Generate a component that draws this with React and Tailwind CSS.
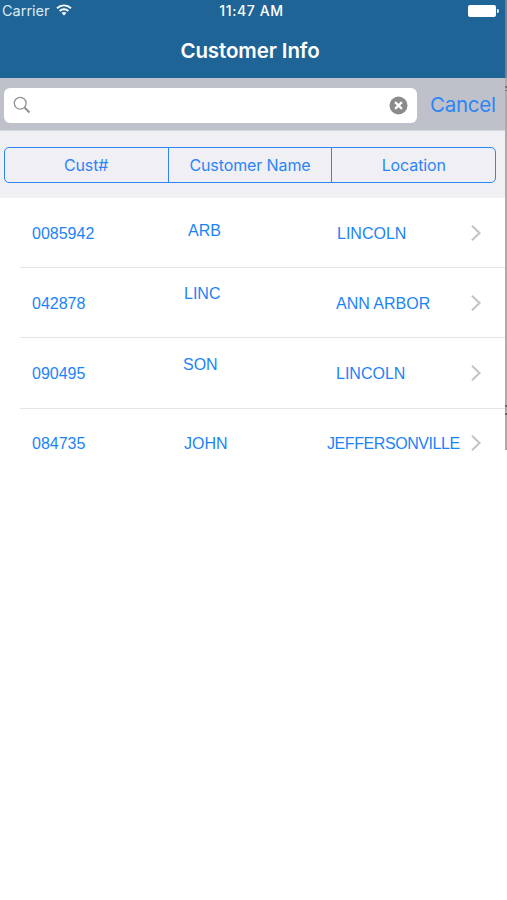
import { useState } from "react";

const customers = [
  { id: "0085942", name: "ARB", location: "LINCOLN", idPos: "pt-[2px]", namePos: "pl-[188px] pb-[3px]", locPos: "pl-[337px] pt-[3px]" },
  { id: "042878", name: "LINC", location: "ANN ARBOR", idPos: "pt-[2px]", namePos: "pl-[184px] pb-[17px]", locPos: "pl-[336px] pt-[2px]" },
  { id: "090495", name: "SON", location: "LINCOLN", idPos: "pt-[2px]", namePos: "pl-[183px] pb-[15px]", locPos: "pl-[336px] pt-[2px]" },
  { id: "084735", name: "JOHN", location: "JEFFERSONVILLE", idPos: "", namePos: "pl-[184px]", locPos: "pl-[327px] tracking-[-0.42px]" },
];

function StatusBar() {
  return (
    <div className="grid grid-cols-3 items-center h-[22px] pl-[2px] pr-[7px] text-white">
      <div className="flex items-center gap-[7px]">
        <span className="text-[14.5px] text-[#dce9f3] leading-none">Carrier</span>
        <svg className="w-4 h-3 mb-[2px] -ml-px" viewBox="0 0 16 12" fill="none" stroke="#fff" strokeWidth="1.9">
          <path d="M1 4.2a10.2 10.2 0 0 1 14 0" />
          <path d="M3.7 7a6.3 6.3 0 0 1 8.6 0" />
          <path d="M8 11.5 5.6 9a3.6 3.6 0 0 1 4.8 0Z" fill="#fff" stroke="none" />
        </svg>
      </div>
      <span className="pl-[3px] text-center text-[14px] font-medium tracking-[0.6px] leading-none whitespace-nowrap">11:47 AM</span>
      <div className="flex items-center justify-end gap-px -mr-px pb-px">
        <div className="w-[28px] h-[12px] rounded-[2px] bg-white" />
        <div className="w-[2px] h-1 rounded-r-full bg-white" />
      </div>
    </div>
  );
}

function SearchBar() {
  const [query, setQuery] = useState("");

  return (
    <div className="flex items-center h-[52px] shrink-0 pl-1 pt-[2px] pr-[9px] bg-[#bfc1ca]">
      <div className="flex items-center w-[413px] shrink-0 h-[35px] px-[9px] rounded-[6px] bg-white">
        <svg className="w-[18px] h-[18px] shrink-0" viewBox="0 0 18 18" fill="none" stroke="#919191">
          <circle cx="7.2" cy="7.2" r="5.9" strokeWidth="1.3" />
          <path d="m11.5 11.5 5 5" strokeWidth="1.9" />
        </svg>
        <input className="flex-1 min-w-0 px-2 outline-none" value={query}
          onChange={e => setQuery(e.target.value)} />
        <button type="button" onClick={() => setQuery("")}>
          <svg className="w-[19px] h-[19px]" viewBox="0 0 19 19">
            <circle cx="9.5" cy="9.5" r="9" fill="#8b8b8d" />
            <path d="m6.1 6.1 6.8 6.8m0-6.8-6.8 6.8" stroke="#fff" strokeWidth="2.2" />
          </svg>
        </button>
      </div>
      <button type="button" className="ml-[13px] text-[20.5px] tracking-[-0.25px] leading-none text-[#2c85f5]">Cancel</button>
    </div>
  );
}

function Segments() {
  return (
    <div className="h-[68px] shrink-0 pt-[16px] pl-1 bg-[#efeff4] border-t border-[#d9d9e0]">
      <div className="grid grid-cols-3 w-[492px] h-[36px] border border-[#2c85f5] rounded-[5px] text-[16px] text-[#2c85f5]">
        <button type="button" className="pb-px pr-px tracking-[-0.1px]">Cust#</button>
        <button type="button" className="pb-px border-x border-[#2c85f5] tracking-[-0.1px]">Customer Name</button>
        <button type="button" className="pb-px pl-px tracking-[-0.1px]">Location</button>
      </div>
    </div>
  );
}

function CustomerRow({ customer }) {
  const { id, name, location, idPos, namePos, locPos } = customer;
  return (
    <li className="group h-[70.2px] shrink-0 flex flex-col">
      <div className="flex-1 grid items-center text-[16px] leading-[18px] text-[#1c83f7]">
        <span className={`col-start-1 row-start-1 pl-8 ${idPos}`}>{id}</span>
        <span className={`col-start-1 row-start-1 ${namePos}`}>{name}</span>
        <span className={`col-start-1 row-start-1 ${locPos}`}>{location}</span>
        <svg className="col-start-1 row-start-1 justify-self-end mr-[23px] w-[12px] h-[18px] group-last:mb-px" viewBox="0 0 12 18" fill="none" stroke="#c4c4c8" strokeWidth="2.1">
          <path d="m2 1.7 7.5 7.3L2 16.3" />
        </svg>
      </div>
      <div className="ml-5 h-px bg-[#e4e4e6] group-last:hidden" />
    </li>
  );
}

function App() {
  return (
    <div className="min-h-screen bg-white font-['Inter',sans-serif]">
      <div className="flex h-[450px]">
        <div className="flex flex-col w-[505px] shrink-0">
          <header className="h-[78px] shrink-0 bg-[#1f6497]">
            <StatusBar />
            <h1 className="pt-[15px] pr-[5px] text-center text-[20.5px] tracking-[-0.1px] leading-[28px] font-semibold text-white">Customer Info</h1>
          </header>
          <SearchBar />
          <Segments />
          <ul className="flex flex-col font-['Liberation_Sans',Arial,sans-serif]">
            {customers.map(customer => <CustomerRow key={customer.id} customer={customer} />)}
          </ul>
        </div>
        <div className="flex flex-col w-[2px] bg-[#a9abad]">
          <div className="h-[78px] bg-[#708694]" />
          <div className="mt-[8px] w-[2px] h-[2px] bg-[#777]" />
          <div className="mt-[2px] w-[2px] h-px bg-[#777]" />
          <div className="mt-[314px] w-[2px] h-[2px] bg-[#666]" />
          <div className="mt-[6px] w-[2px] h-[2px] bg-[#666]" />
        </div>
      </div>
    </div>
  );
}

export default App;
